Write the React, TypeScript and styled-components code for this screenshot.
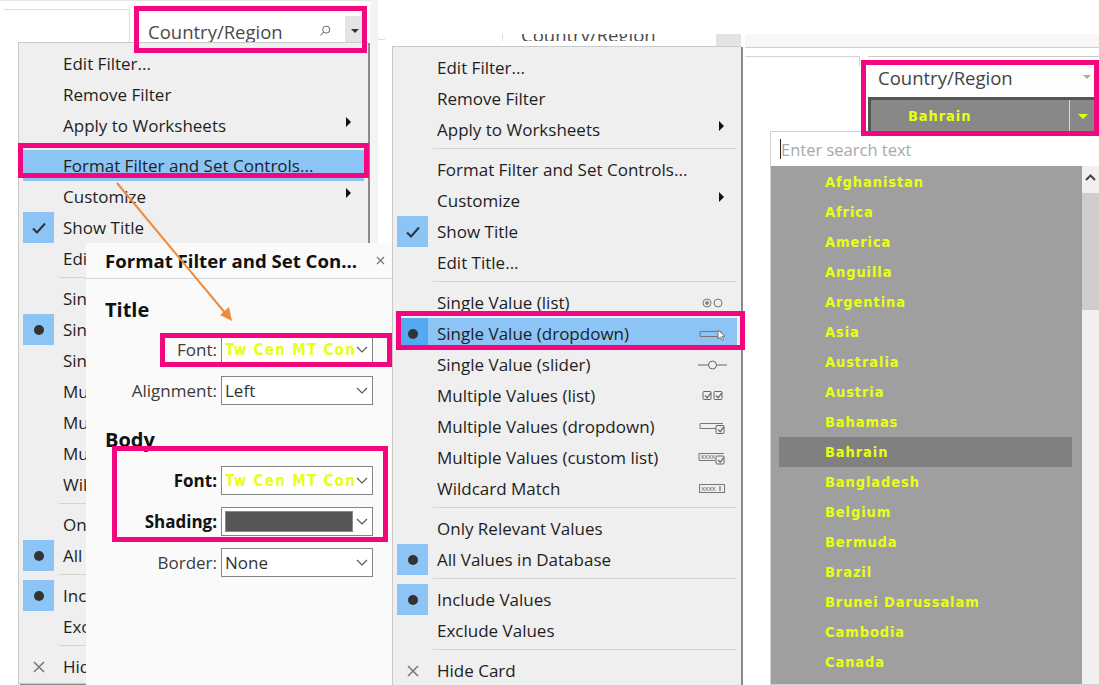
import React from "react";
import styled, { createGlobalStyle } from "styled-components";

const Global = createGlobalStyle`
  html, body { margin: 0; padding: 0; background: #fff; }
  body { font-family: "Open Sans", "Noto Sans", sans-serif; }
`;

const PINK = "#f4067f";
const YELLOW = "#e8ff14";
const UI = `"Open Sans", "Noto Sans", sans-serif`;
const CONDENSED = `"Liberation Sans Narrow", "DejaVu Sans Condensed", "Roboto", sans-serif`;

const Canvas = styled.div`
  position: relative;
  width: 1099px;
  height: 685px;
  overflow: hidden;
  background: #fff;
  color: #1c1c1c;
`;

/* pieces of the collage */
const Piece = styled.div<{ $x: number; $y: number; $w: number; $h: number; $bg?: string }>`
  position: absolute;
  left: ${(p) => p.$x}px;
  top: ${(p) => p.$y}px;
  width: ${(p) => p.$w}px;
  height: ${(p) => p.$h}px;
  background: ${(p) => p.$bg ?? "transparent"};
`;

const PinkBox = styled.div<{ $x: number; $y: number; $w: number; $h: number }>`
  position: absolute;
  left: ${(p) => p.$x}px;
  top: ${(p) => p.$y}px;
  width: ${(p) => p.$w}px;
  height: ${(p) => p.$h}px;
  box-sizing: border-box;
  border: 5px solid ${PINK};
  pointer-events: none;
`;

/* context menu */
const MenuPanel = styled.div<{ $x: number; $y: number; $w: number; $h: number }>`
  position: absolute;
  left: ${(p) => p.$x}px;
  top: ${(p) => p.$y}px;
  width: ${(p) => p.$w}px;
  height: ${(p) => p.$h}px;
  box-sizing: border-box;
  padding: 5px 4px 0;
  background: #efefef;
  border: 1px solid #c9c9c9;
  border-right: none;
  box-shadow: 2px 1px 0 #8a8a8a;
  font-family: ${UI};
  overflow: hidden;
`;

const Row = styled.div<{ $hover?: boolean }>`
  display: flex;
  align-items: center;
  height: 31px;
  background: ${(p) => (p.$hover ? "#8cc4f5" : "transparent")};
`;

const Mark = styled.div<{ $on?: boolean; $hover?: boolean }>`
  flex: 0 0 31px;
  height: 31px;
  display: flex;
  align-items: center;
  justify-content: center;
  background: ${(p) => (p.$on ? (p.$hover ? "#55a9f2" : "#8cc4f5") : "transparent")};
`;

const Dot = styled.span`
  width: 10px;
  height: 10px;
  border-radius: 50%;
  background: #333;
`;

const RowLabel = styled.span`
  flex: 1;
  margin-left: 9px;
  font-size: 17px;
  line-height: 31px;
  white-space: nowrap;
  color: #1e1e1e;
`;

const Arrow = styled.span`
  width: 0;
  height: 0;
  margin-right: 13px;
  margin-top: -8px;
  border-left: 5px solid #111;
  border-top: 5px solid transparent;
  border-bottom: 5px solid transparent;
`;

const RowIcon = styled.svg`
  flex: 0 0 32px;
  width: 32px;
  height: 16px;
  margin-right: 8px;
`;

const Sep = styled.div`
  height: 9px;
  margin: 0 0 0 36px;
  position: relative;
  &::after {
    content: "";
    display: block;
    margin-top: 3px;
    height: 1px;
    background: #d4d4d4;
    position: absolute;
    left: 0;
    right: 0;
  }
`;

type MenuIconKind = "radio" | "drop" | "slider" | "checks" | "multi" | "custom" | "wild";

const Cursor = () => (
  <path d="M21 4 L21 13 L23.4 11 L25 14.4 L26.5 13.6 L25 10.4 L28 10.2 Z" fill="#fff" stroke="#777" strokeWidth="1" />
);
const Tick = ({ x, y, s }: { x: number; y: number; s: number }) => (
  <g fill="none" stroke="#666" strokeWidth="1">
    <rect x={x} y={y} width={s} height={s} rx="1" />
    <path d={`M${x + 2} ${y + s / 2} l2.2 2.4 l3.6 -5`} strokeWidth="1.2" />
  </g>
);
const Xs = ({ x, y }: { x: number; y: number }) => (
  <text x={x} y={y} fontSize="8" fontFamily="Liberation Sans, sans-serif" fill="#777" letterSpacing="-0.4">
    xxxx
  </text>
);

const MenuIcon = ({ kind }: { kind: MenuIconKind }) => (
  <RowIcon viewBox="0 0 32 16">
    {kind === "radio" && (
      <g fill="none" stroke="#777">
        <circle cx="10" cy="8" r="4" />
        <circle cx="10" cy="8" r="2" fill="#888" stroke="none" />
        <circle cx="21" cy="8" r="4" />
      </g>
    )}
    {kind === "drop" && (
      <g>
        <path d="M3 5.5 H24 V10.5 H3 Z" fill="none" stroke="#777" />
        <Cursor />
      </g>
    )}
    {kind === "slider" && (
      <g>
        <path d="M1 8 H30" stroke="#aaa" strokeWidth="2" />
        <circle cx="15.5" cy="8" r="4" fill="#efefef" stroke="#666" />
      </g>
    )}
    {kind === "checks" && (
      <g>
        <Tick x={6} y={3.5} s={8} />
        <Tick x={17} y={3.5} s={8} />
      </g>
    )}
    {kind === "multi" && (
      <g>
        <path d="M3 4.5 H26 M3 9.5 H19 M3 4.5 V9.5" fill="none" stroke="#777" />
        <Tick x={19} y={6.5} s={8} />
      </g>
    )}
    {kind === "custom" && (
      <g>
        <path d="M18 10.5 H2 V3.5 H27" fill="none" stroke="#777" />
        <Xs x={3.5} y={9} />
        <Tick x={19} y={6} s={8} />
      </g>
    )}
    {kind === "wild" && (
      <g>
        <rect x="2.5" y="3.5" width="25" height="8" fill="none" stroke="#777" />
        <Xs x={4} y={10} />
        <path d="M23 5 V10" stroke="#555" />
      </g>
    )}
  </RowIcon>
);

type Item =
  | { sep: true }
  | { label: string; mark?: "check" | "dot" | "x"; sub?: boolean; icon?: MenuIconKind };

const ITEMS: Item[] = [
  { label: "Edit Filter..." },
  { label: "Remove Filter" },
  { label: "Apply to Worksheets", sub: true },
  { sep: true },
  { label: "Format Filter and Set Controls..." },
  { label: "Customize", sub: true },
  { label: "Show Title", mark: "check" },
  { label: "Edit Title..." },
  { sep: true },
  { label: "Single Value (list)", icon: "radio" },
  { label: "Single Value (dropdown)", mark: "dot", icon: "drop" },
  { label: "Single Value (slider)", icon: "slider" },
  { label: "Multiple Values (list)", icon: "checks" },
  { label: "Multiple Values (dropdown)", icon: "multi" },
  { label: "Multiple Values (custom list)", icon: "custom" },
  { label: "Wildcard Match", icon: "wild" },
  { sep: true },
  { label: "Only Relevant Values" },
  { label: "All Values in Database", mark: "dot" },
  { sep: true },
  { label: "Include Values", mark: "dot" },
  { label: "Exclude Values" },
  { sep: true },
  { label: "Hide Card", mark: "x" },
];

const CheckGlyph = () => (
  <svg width="16" height="14" viewBox="0 0 16 14">
    <path d="M2 7.5 L6 11.5 L14 2.5" fill="none" stroke="#333" strokeWidth="2" />
  </svg>
);
const CrossGlyph = () => (
  <svg width="12" height="12" viewBox="0 0 12 12">
    <path d="M1 1 L11 11 M11 1 L1 11" fill="none" stroke="#777" strokeWidth="1.5" />
  </svg>
);

const Menu = ({ x, y, w, h, hover }: { x: number; y: number; w: number; h: number; hover: string }) => (
  <MenuPanel $x={x} $y={y} $w={w} $h={h}>
    {ITEMS.map((it, i) => {
      if ("sep" in it) return <Sep key={i} />;
      const isHover = it.label === hover;
      return (
        <Row key={i} $hover={isHover}>
          <Mark $on={it.mark === "check" || it.mark === "dot"} $hover={isHover}>
            {it.mark === "check" && <CheckGlyph />}
            {it.mark === "dot" && <Dot />}
            {it.mark === "x" && <CrossGlyph />}
          </Mark>
          <RowLabel>{it.label}</RowLabel>
          {it.sub && <Arrow />}
          {it.icon && <MenuIcon kind={it.icon} />}
        </Row>
      );
    })}
  </MenuPanel>
);

/* filter card headers */
const CardHead = styled.div`
  height: 100%;
  display: flex;
  align-items: center;
  padding-left: 13px;
  background: #fff;
  font-family: ${UI};
  font-size: 18.5px;
  color: #4a4a4a;
`;
const CardTitle = styled.span`
  flex: 1;
  white-space: nowrap;
`;
const HeadCaretBox = styled.div`
  width: 19px;
  height: 31px;
  margin-right: 5px;
  background: #e4e4e4;
  display: flex;
  align-items: center;
  justify-content: center;
`;
const Caret = styled.span<{ $c?: string; $w?: number }>`
  width: 0;
  height: 0;
  border-top: ${(p) => Math.round((p.$w ?? 4) * 0.9)}px solid ${(p) => p.$c ?? "#333"};
  border-left: ${(p) => p.$w ?? 4}px solid transparent;
  border-right: ${(p) => p.$w ?? 4}px solid transparent;
`;

/* format dialog */
const Dialog = styled.div`
  position: absolute;
  left: 86px;
  top: 243px;
  width: 306px;
  height: 442px;
  background: #fafafa;
  font-family: ${UI};
  color: #3b3b3b;
`;
const DialogHead = styled.div`
  height: 35px;
  display: flex;
  align-items: center;
  padding: 0 7px 0 19px;
  border-bottom: 1px solid #d6d6d6;
`;
const DialogTitle = styled.div`
  flex: 1;
  font-size: 18.6px;
  font-weight: 700;
  color: #111;
  white-space: nowrap;
`;
const CloseX = styled.svg`
  width: 9px;
  height: 9px;
`;
const SectionTitle = styled.div<{ $mt: number }>`
  margin: ${(p) => p.$mt}px 0 0 19px;
  font-size: 20px;
  line-height: 26px;
  font-weight: 700;
  color: #111;
`;
const FieldRow = styled.div<{ $mt: number }>`
  display: flex;
  align-items: center;
  justify-content: flex-end;
  gap: 4px;
  margin: ${(p) => p.$mt}px 19px 0 0;
`;
const FieldLabel = styled.span<{ $bold?: boolean }>`
  font-size: 17px;
  font-weight: ${(p) => (p.$bold ? 700 : 400)};
  color: ${(p) => (p.$bold ? "#111" : "#3b3b3b")};
`;
const Select = styled.div`
  box-sizing: border-box;
  width: 152px;
  height: 29px;
  padding-left: 3px;
  display: flex;
  align-items: center;
  background: #fff;
  border: 1px solid #858585;
`;
const SelectText = styled.span<{ $font?: boolean }>`
  flex: 1;
  white-space: nowrap;
  overflow: hidden;
  font-family: ${(p) => (p.$font ? CONDENSED : UI)};
  font-size: ${(p) => (p.$font ? "15px" : "17px")};
  font-weight: ${(p) => (p.$font ? 700 : 400)};
  letter-spacing: ${(p) => (p.$font ? "1.3px" : "0")};
  color: ${(p) => (p.$font ? YELLOW : "#333")};
`;
const Swatch = styled.span`
  flex: 0 0 128px;
  box-sizing: border-box;
  height: 21px;
  background: #565656;
  border: 1px solid #8a8a8a;
`;
const Chevron = styled.svg`
  flex: 0 0 12px;
  width: 12px;
  height: 7px;
  margin: 0 4px 0 auto;
`;
const Chev = () => (
  <Chevron viewBox="0 0 12 7">
    <path d="M1 1 L6 6 L11 1" fill="none" stroke="#555" strokeWidth="1.1" />
  </Chevron>
);

/* right-hand panel */
const RightTitle = styled.div`
  height: 41px;
  display: flex;
  align-items: center;
  padding: 0 8px 0 10px;
  border-top: 1px solid #ccc;
  box-sizing: border-box;
  background: #fdfdfd;
  font-family: ${UI};
  font-size: 18.5px;
  color: #444;
`;
const RightCombo = styled.div`
  height: 38px;
  box-sizing: border-box;
  display: flex;
  align-items: center;
  background: #888;
  border: 3px solid #555;
  padding-left: 37px;
`;
const ComboText = styled.span`
  flex: 1;
  font-family: ${CONDENSED};
  font-size: 14.5px;
  font-weight: 700;
  letter-spacing: 0.9px;
  color: ${YELLOW};
`;
const ComboBtn = styled.div`
  width: 26px;
  height: 100%;
  display: flex;
  align-items: center;
  justify-content: center;
  border-left: 1px solid #d6d6d6;
`;

const Dropdown = styled.div`
  position: absolute;
  left: 770px;
  top: 131px;
  width: 329px;
  height: 554px;
  display: flex;
  flex-direction: column;
  border: 1px solid #cfcfcf;
  border-right: none;
  box-sizing: border-box;
  background: #fff;
`;
const SearchBox = styled.div`
  height: 34px;
  flex: none;
  display: flex;
  align-items: center;
  padding-left: 9px;
  font-family: ${UI};
  font-size: 16.5px;
  color: #a8a8a8;
  background: #fff;
`;
const CaretBar = styled.span`
  width: 1px;
  height: 20px;
  background: #222;
`;
const ListWrap = styled.div`
  flex: 1;
  display: flex;
  min-height: 0;
`;
const List = styled.div`
  flex: 1;
  padding: 1px 10px 0 8px;
  background: #9f9f9f;
  overflow: hidden;
`;
const ListItem = styled.div<{ $on?: boolean }>`
  height: 30px;
  line-height: 30px;
  padding-left: 46px;
  font-family: ${CONDENSED};
  font-size: 14.5px;
  font-weight: 700;
  letter-spacing: 0.9px;
  color: ${YELLOW};
  background: ${(p) => (p.$on ? "#808080" : "transparent")};
`;
const Scroll = styled.div`
  flex: 0 0 17px;
  background: #f0f0f0;
  display: flex;
  flex-direction: column;
`;
const ScrollUp = styled.div`
  height: 27px;
  display: flex;
  justify-content: center;
  padding-top: 8px;
  box-sizing: border-box;
`;
const ScrollThumb = styled.div`
  height: 117px;
  background: #cdcdcd;
`;

const Overlay = styled.svg`
  position: absolute;
  left: 0;
  top: 0;
  width: 1099px;
  height: 685px;
  pointer-events: none;
`;

const COUNTRIES = [
  "Afghanistan", "Africa", "America", "Anguilla", "Argentina", "Asia", "Australia", "Austria", "Bahamas",
  "Bahrain", "Bangladesh", "Belgium", "Bermuda", "Brazil", "Brunei Darussalam", "Cambodia", "Canada",
];

export default function App() {
  return (
    <Canvas>
      <Global />
      {/* backdrop fragments */}
      <Piece $x={0} $y={0} $w={378} $h={1} $bg="#e6e6e6" />
      <Piece $x={370} $y={0} $w={8} $h={243} $bg="#f4f4f4" />
      <Piece $x={4} $y={9} $w={126} $h={1} $bg="#dcdcdc" />
      <Piece $x={129} $y={9} $w={1} $h={33} $bg="#dcdcdc" />
      <Piece $x={378} $y={39} $w={7} $h={1} $bg="#dcdcdc" />

      <Piece $x={135} $y={10} $w={234} $h={42}>
        <CardHead>
          <CardTitle>Country/Region</CardTitle>
          <svg width="12" height="12" viewBox="0 0 12 12" style={{ marginRight: 14 }}>
            <circle cx="7.2" cy="4.6" r="3.4" fill="none" stroke="#777" strokeWidth="1.1" />
            <path d="M4.6 7 L1.5 10.5" stroke="#777" strokeWidth="1.1" />
          </svg>
          <HeadCaretBox>
            <Caret />
          </HeadCaretBox>
        </CardHead>
      </Piece>

      <Menu x={18} y={42} w={350} h={642} hover="Format Filter and Set Controls..." />

      {/* clipped card behind the second menu */}
      <Piece $x={502} $y={34} $w={240} $h={12} $bg="#fff">
        <CardHead style={{ borderLeft: "1px solid #ddd", paddingLeft: 18, alignItems: "flex-start", height: 7, overflow: "hidden", lineHeight: "2px" }}>
          <CardTitle>Country/Region</CardTitle>
        </CardHead>
      </Piece>
      <Piece $x={716} $y={34} $w={25} $h={12} $bg="#e4e4e4" />
      <Piece $x={745} $y={34} $w={354} $h={13} $bg="#f7f7f7" />
      <Piece $x={745} $y={47} $w={354} $h={1} $bg="#cfcfcf" />
      <Piece $x={745} $y={56} $w={115} $h={1} $bg="#d4d4d4" />
      <Piece $x={859} $y={56} $w={1} $h={10} $bg="#d4d4d4" />

      <Menu x={392} y={46} w={349} h={650} hover="Single Value (dropdown)" />

      <Dialog>
        <DialogHead>
          <DialogTitle>Format Filter and Set Con...</DialogTitle>
          <CloseX viewBox="0 0 9 9">
            <path d="M1 1 L8 8 M8 1 L1 8" stroke="#777" strokeWidth="1.2" />
          </CloseX>
        </DialogHead>
        <SectionTitle $mt={18}>Title</SectionTitle>
        <FieldRow $mt={12}>
          <FieldLabel>Font:</FieldLabel>
          <Select>
            <SelectText $font>Tw Cen MT Conde..</SelectText>
            <Chev />
          </Select>
        </FieldRow>
        <FieldRow $mt={12}>
          <FieldLabel>Alignment:</FieldLabel>
          <Select>
            <SelectText>Left</SelectText>
            <Chev />
          </Select>
        </FieldRow>
        <SectionTitle $mt={22}>Body</SectionTitle>
        <FieldRow $mt={13}>
          <FieldLabel $bold>Font:</FieldLabel>
          <Select>
            <SelectText $font>Tw Cen MT Conde..</SelectText>
            <Chev />
          </Select>
        </FieldRow>
        <FieldRow $mt={12}>
          <FieldLabel $bold>Shading:</FieldLabel>
          <Select>
            <Swatch />
            <Chev />
          </Select>
        </FieldRow>
        <FieldRow $mt={12}>
          <FieldLabel>Border:</FieldLabel>
          <Select>
            <SelectText>None</SelectText>
            <Chev />
          </Select>
        </FieldRow>
      </Dialog>

      {/* right-hand card */}
      <Piece $x={868} $y={56} $w={231} $h={80}>
        <RightTitle>
          <CardTitle>Country/Region</CardTitle>
          <Caret $c="#aaa" $w={4} />
        </RightTitle>
        <RightCombo>
          <ComboText>Bahrain</ComboText>
          <ComboBtn>
            <Caret $c={YELLOW} $w={5} />
          </ComboBtn>
        </RightCombo>
      </Piece>

      <Dropdown>
        <SearchBox>
          <CaretBar />
          Enter search text
        </SearchBox>
        <ListWrap>
          <List>
            {COUNTRIES.map((c) => (
              <ListItem key={c} $on={c === "Bahrain"}>
                {c}
              </ListItem>
            ))}
          </List>
          <Scroll>
            <ScrollUp>
              <svg width="11" height="7" viewBox="0 0 11 7">
                <path d="M1 6 L5.5 1.5 L10 6" fill="none" stroke="#444" strokeWidth="2" />
              </svg>
            </ScrollUp>
            <ScrollThumb />
          </Scroll>
        </ListWrap>
      </Dropdown>

      {/* annotations */}
      <Overlay viewBox="0 0 1099 685">
        <path d="M117 183 L226 314" stroke="#ee8a3c" strokeWidth="2" />
        <path d="M232 321 L220 315 L229 307 Z" fill="#ee8a3c" />
      </Overlay>
      <PinkBox $x={134} $y={6} $w={233} $h={47} />
      <PinkBox $x={18} $y={143} $w={351} $h={35} />
      <PinkBox $x={160} $y={333} $w={232} $h={34} />
      <PinkBox $x={112} $y={446} $w={276} $h={96} />
      <PinkBox $x={396} $y={311} $w={349} $h={39} />
      <PinkBox $x={861} $y={60} $w={238} $h={76} />
    </Canvas>
  );
}
